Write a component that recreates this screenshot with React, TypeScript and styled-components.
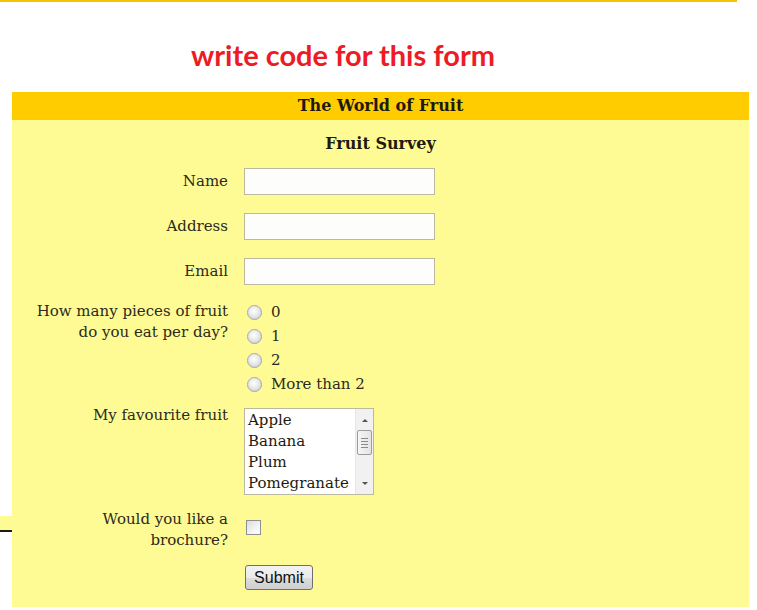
import React from 'react';
import styled, { createGlobalStyle } from 'styled-components';

const GlobalStyle = createGlobalStyle`
  html, body {
    margin: 0;
    padding: 0;
    background: #ffffff;
  }
`;

const fruits = ['Apple', 'Banana', 'Plum', 'Pomegranate'];
const portions = ['0', '1', '2', 'More than 2'];

function App(): React.ReactElement {
  return (
    <Page>
      <GlobalStyle />
      <TopRule />
      <Prompt>write code for this form</Prompt>
      <Panel>
        <SiteBar>The World of Fruit</SiteBar>
        <Survey onSubmit={(e) => e.preventDefault()}>
          <SurveyTitle>Fruit Survey</SurveyTitle>

          <Row $top={13}>
            <Label htmlFor="name">Name</Label>
            <TextInput id="name" type="text" />
          </Row>
          <Row $top={18}>
            <Label htmlFor="address">Address</Label>
            <TextInput id="address" type="text" />
          </Row>
          <Row $top={18}>
            <Label htmlFor="email">Email</Label>
            <TextInput id="email" type="email" />
          </Row>

          <Row $top={15} $align="flex-start">
            <Label as="span" $shift={1}>
              How many pieces of fruit
              <br />
              do you eat per day?
            </Label>
            <RadioList>
              {portions.map((p) => (
                <RadioItem key={p}>
                  <Radio type="radio" name="portions" value={p} />
                  <span>{p}</span>
                </RadioItem>
              ))}
            </RadioList>
          </Row>

          <Row $top={12} $align="flex-start">
            <Label as="span" $shift={-3}>
              My favourite fruit
            </Label>
            <ListBox role="listbox" aria-label="My favourite fruit">
              <Options>
                {fruits.map((f) => (
                  <Option key={f} role="option" aria-selected="false">
                    {f}
                  </Option>
                ))}
              </Options>
              <ScrollTrack>
                <Arrow $dir="up" />
                <Thumb>
                  <Grip />
                  <Grip />
                  <Grip />
                  <Grip />
                </Thumb>
                <Arrow $dir="down" />
              </ScrollTrack>
            </ListBox>
          </Row>

          <Row $top={14} $align="flex-start">
            <Label htmlFor="brochure">
              Would you like a
              <br />
              brochure?
            </Label>
            <Check id="brochure" type="checkbox" />
          </Row>

          <Row $top={14}>
            <Label as="span" />
            <SubmitButton type="submit">Submit</SubmitButton>
          </Row>
        </Survey>
      </Panel>
      <EdgeScrap />
    </Page>
  );
}

const Page = styled.div`
  position: relative;
  width: 757px;
  height: 610px;
  overflow: hidden;
  font-family: 'DejaVu Serif', Georgia, serif;
`;

const TopRule = styled.div`
  width: 737px;
  height: 2px;
  background: #f4c400;
`;

const Prompt = styled.h1`
  margin: 0;
  padding: 36px 0 0 191px;
  height: 54px;
  font-family: Lato, 'Open Sans', sans-serif;
  font-weight: 700;
  font-size: 29px;
  line-height: 34px;
  color: #ed1c24;
`;

const Panel = styled.section`
  margin-left: 12px;
  width: 737px;
  height: 515px;
  background: #fffb94;
`;

const SiteBar = styled.div`
  height: 28px;
  line-height: 28px;
  background: #ffcc00;
  text-align: center;
  font-weight: 700;
  font-size: 16px;
  color: #1e1a10;
`;

const Survey = styled.form`
  display: flex;
  flex-direction: column;
  padding-top: 13px;
`;

const SurveyTitle = styled.h2`
  margin: 0;
  text-align: center;
  font-size: 16px;
  line-height: 22px;
  font-weight: 700;
  color: #1e1a10;
`;

const Row = styled.div<{ $top: number; $align?: string }>`
  display: flex;
  align-items: ${(p) => p.$align ?? 'center'};
  gap: 16px;
  margin-top: ${(p) => p.$top}px;
`;

const Label = styled.label<{ $shift?: number }>`
  flex: 0 0 216px;
  margin-top: ${(p) => p.$shift ?? 0}px;
  text-align: right;
  font-size: 15px;
  line-height: 21px;
  color: #2b2a1c;
`;

const TextInput = styled.input`
  box-sizing: border-box;
  width: 191px;
  height: 27px;
  margin: 0;
  padding: 2px 4px;
  border: 1px solid #bdb9a0;
  background: #fdfdfb;
  font: inherit;
`;

const RadioList = styled.div`
  display: flex;
  flex-direction: column;
`;

const RadioItem = styled.label`
  display: flex;
  align-items: center;
  gap: 9px;
  height: 24px;
  padding-left: 3px;
  font-size: 15px;
  color: #2b2a1c;
`;

const Radio = styled.input`
  appearance: none;
  width: 15px;
  height: 15px;
  margin: 0;
  border-radius: 50%;
  border: 1px solid #a8a8a8;
  background: radial-gradient(circle at 45% 40%, #ffffff 0%, #ececec 40%, #c6c6c6 100%);

  &:checked {
    background: radial-gradient(circle, #3a6fb5 0 3px, #f0f0f0 4px, #c4c4c4 100%);
  }
`;

const ListBox = styled.div`
  box-sizing: border-box;
  display: flex;
  width: 130px;
  height: 87px;
  border: 1px solid #bdb9a0;
  background: #ffffff;
  overflow: hidden;
`;

const Options = styled.div`
  flex: 1;
  padding: 1px 0 0 3px;
`;

const Option = styled.div`
  height: 21px;
  line-height: 21px;
  font-size: 15px;
  color: #1e1a10;
  white-space: nowrap;
  cursor: default;
`;

const ScrollTrack = styled.div`
  flex: 0 0 17px;
  display: flex;
  flex-direction: column;
  align-items: center;
  background: #f1f1f1;
  border-left: 1px solid #e6e6e6;
`;

const Arrow = styled.span<{ $dir: 'up' | 'down' }>`
  display: block;
  width: 0;
  height: 0;
  margin: ${(p) => (p.$dir === 'up' ? '10px 0 8px' : 'auto 0 9px')};
  border-left: 3px solid transparent;
  border-right: 3px solid transparent;
  ${(p) =>
    p.$dir === 'up'
      ? 'border-bottom: 3px solid #555555;'
      : 'border-top: 3px solid #555555;'}
`;

const Thumb = styled.div`
  box-sizing: border-box;
  display: flex;
  flex-direction: column;
  justify-content: center;
  align-items: center;
  gap: 2px;
  width: 15px;
  height: 25px;
  border: 1px solid #9c9c9c;
  border-radius: 2px;
  background: linear-gradient(90deg, #f6f6f6, #e4e4e4);
`;

const Grip = styled.span`
  display: block;
  width: 7px;
  height: 1px;
  background: #8a8a8a;
`;

const Check = styled.input`
  appearance: none;
  width: 15px;
  height: 15px;
  margin: 11px 0 0 2px;
  border: 1px solid #8e8f8f;
  background: linear-gradient(135deg, #dcdcdc 0%, #f4f4f4 60%, #ffffff 100%);

  &:checked {
    background: #ffffff;
    box-shadow: inset 0 0 0 3px #ffffff, inset 0 0 0 8px #3a6fb5;
  }
`;

const SubmitButton = styled.button`
  box-sizing: border-box;
  width: 68px;
  height: 25px;
  margin-left: 1px;
  padding: 0;
  border: 1px solid #707070;
  border-radius: 3px;
  background: linear-gradient(#f2f2f2 0%, #ebebeb 50%, #dddddd 51%, #cfcfcf 100%);
  font-family: 'Liberation Sans', Arial, sans-serif;
  font-size: 16px;
  color: #111111;
`;

const EdgeScrap = styled.div`
  position: absolute;
  left: 0;
  top: 516px;
  width: 12px;
  height: 14px;
  background: #fffb94;
  border-bottom: 2px solid #1a1a1a;
`;

export default App;
